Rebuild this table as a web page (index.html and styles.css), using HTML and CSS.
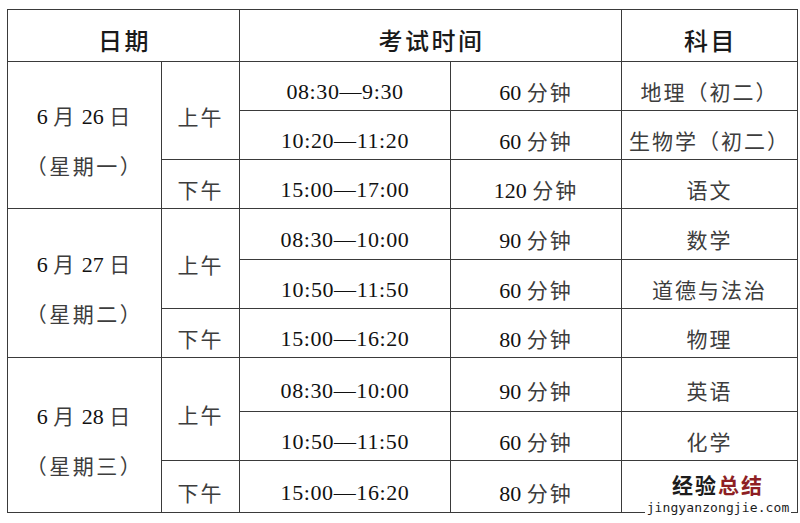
FILE: index.html
```html
<!DOCTYPE html>
<html lang="zh-CN">
<head>
<meta charset="utf-8">
<title>考试时间安排</title>
<link rel="stylesheet" href="styles.css">
</head>
<body>
<div class="page">
  <table class="schedule">
    <colgroup>
      <col class="c-date"><col class="c-half"><col class="c-time"><col class="c-dur"><col class="c-subj">
    </colgroup>
    <thead>
      <tr class="row-head">
        <th colspan="2">日期</th>
        <th colspan="2">考试时间</th>
        <th>科目</th>
      </tr>
    </thead>
    <tbody>
      <tr class="row">
        <td rowspan="3" class="date"><div class="date-line">6 <span class="zh">月</span> 26 <span class="zh">日</span></div><div class="date-line"><span class="zh wide">（星期一）</span></div></td>
        <td rowspan="2"><span class="zh">上午</span></td>
        <td class="time">08:30<span class="dash">—</span>9:30</td>
        <td>60 <span class="zh">分钟</span></td>
        <td><span class="zh">地理（初二）</span></td>
      </tr>
      <tr class="row">
        <td class="time">10:20<span class="dash">—</span>11:20</td>
        <td>60 <span class="zh">分钟</span></td>
        <td><span class="zh">生物学（初二）</span></td>
      </tr>
      <tr class="row">
        <td><span class="zh">下午</span></td>
        <td class="time">15:00<span class="dash">—</span>17:00</td>
        <td>120 <span class="zh">分钟</span></td>
        <td><span class="zh">语文</span></td>
      </tr>
      <tr class="row row-51">
        <td rowspan="3" class="date"><div class="date-line">6 <span class="zh">月</span> 27 <span class="zh">日</span></div><div class="date-line"><span class="zh wide">（星期二）</span></div></td>
        <td rowspan="2"><span class="zh">上午</span></td>
        <td class="time">08:30<span class="dash">—</span>10:00</td>
        <td>90 <span class="zh">分钟</span></td>
        <td><span class="zh">数学</span></td>
      </tr>
      <tr class="row">
        <td class="time">10:50<span class="dash">—</span>11:50</td>
        <td>60 <span class="zh">分钟</span></td>
        <td><span class="zh">道德与法治</span></td>
      </tr>
      <tr class="row">
        <td><span class="zh">下午</span></td>
        <td class="time">15:00<span class="dash">—</span>16:20</td>
        <td>80 <span class="zh">分钟</span></td>
        <td><span class="zh">物理</span></td>
      </tr>
      <tr class="row row-54">
        <td rowspan="3" class="date"><div class="date-line">6 <span class="zh">月</span> 28 <span class="zh">日</span></div><div class="date-line"><span class="zh wide">（星期三）</span></div></td>
        <td rowspan="2"><span class="zh">上午</span></td>
        <td class="time">08:30<span class="dash">—</span>10:00</td>
        <td>90 <span class="zh">分钟</span></td>
        <td><span class="zh">英语</span></td>
      </tr>
      <tr class="row">
        <td class="time">10:50<span class="dash">—</span>11:50</td>
        <td>60 <span class="zh">分钟</span></td>
        <td><span class="zh">化学</span></td>
      </tr>
      <tr class="row row-52">
        <td><span class="zh">下午</span></td>
        <td class="time">15:00<span class="dash">—</span>16:20</td>
        <td>80 <span class="zh">分钟</span></td>
        <td class="last-cell"></td>
      </tr>
    </tbody>
  </table>
  <div class="watermark">
    <div class="wm-title"><span class="wm-dark">经验</span><span class="wm-red">总结</span></div>
    <div class="wm-url">jingyanzongjie.com</div>
  </div>
</div>
</body>
</html>
```

FILE: styles.css
```css
html, body {
  margin: 0;
  padding: 0;
  background: #ffffff;
}

.page {
  position: relative;
  width: 800px;
  height: 523px;
  padding: 9px 0 0 7px;
  box-sizing: border-box;
}

.schedule {
  border-collapse: collapse;
  table-layout: fixed;
  width: 790px;
  font-family: "Liberation Serif", "Noto Sans CJK SC", serif;
  font-size: 22px;
  color: #111;
}

.c-date { width: 154px; }
.c-half { width: 78px; }
.c-time { width: 211px; }
.c-dur  { width: 171px; }
.c-subj { width: 176px; }

.schedule th,
.schedule td {
  border: 1px solid #3a3a3a;
  text-align: center;
  vertical-align: middle;
  padding: 12px 0 0 0;
  line-height: 26px;
  white-space: nowrap;
}

.schedule th {
  font-family: "Noto Sans CJK SC", sans-serif;
  font-weight: 500;
  font-size: 24px;
  letter-spacing: 2.5px;
  padding: 8px 0 0 2px;
  color: #1a1a1a;
}

.row-head { height: 52px; }
.row { height: 49px; }
.row-51 { height: 51px; }
.row-54 { height: 54px; }
.row-52 { height: 52px; }

.zh {
  font-family: "Noto Sans CJK SC", sans-serif;
  font-size: 21px;
  color: #3d3d3d;
  letter-spacing: 2px;
}

.zh.wide {
  letter-spacing: 2.5px;
}

.time {
  letter-spacing: 0.6px;
}

.date {
  padding-top: 14px;
}

.date-line {
  line-height: 48px;
}

.watermark {
  position: absolute;
  left: 645px;
  top: 473px;
  width: 146px;
  background: #ffffff;
  text-align: center;
}

.wm-title {
  font-family: "Noto Sans CJK SC", sans-serif;
  font-weight: 700;
  font-size: 21px;
  line-height: 22px;
  height: 22px;
  letter-spacing: 2px;
}

.wm-dark { color: #1c1c1c; }
.wm-red { color: #8e1f24; }

.wm-url {
  margin-top: 7px;
  font-family: "DejaVu Sans Mono", "Liberation Mono", monospace;
  font-size: 13px;
  line-height: 12px;
  letter-spacing: 0.1px;
  color: #1c1c1c;
}
```
